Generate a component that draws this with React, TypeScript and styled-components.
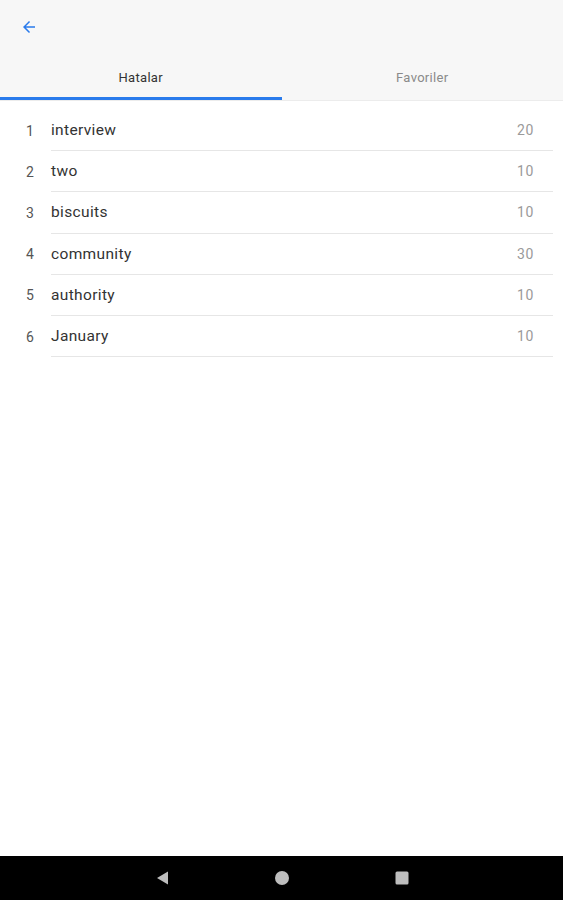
import React from 'react';
import styled, { createGlobalStyle } from 'styled-components';

const GlobalStyle = createGlobalStyle`
  html, body {
    margin: 0;
    padding: 0;
    background: #ffffff;
    font-family: Roboto, "Noto Sans", Arial, sans-serif;
  }
`;

const words = [
  { word: 'interview', count: 20 },
  { word: 'two', count: 10 },
  { word: 'biscuits', count: 10 },
  { word: 'community', count: 30 },
  { word: 'authority', count: 10 },
  { word: 'January', count: 10 },
];

export default function App() {
  return (
    <>
      <GlobalStyle />
      <Screen>
        <Header>
          <Toolbar>
            <BackButton aria-label="back">
              <svg width="18" height="18" viewBox="0 0 24 24">
                <path
                  d="M20 11H7.83l5.59-5.59L12 4l-8 8 8 8 1.41-1.41L7.83 13H20v-2z"
                  fill="#2a7bec"
                />
              </svg>
            </BackButton>
          </Toolbar>
          <Tabs>
            <Tab active>Hatalar</Tab>
            <Tab>Favoriler</Tab>
          </Tabs>
        </Header>
        <List>
          {words.map((w, i) => (
            <Row key={w.word}>
              <Index>{i + 1}</Index>
              <RowBody>
                <Word>{w.word}</Word>
                <Count>{w.count}</Count>
              </RowBody>
            </Row>
          ))}
        </List>
        <NavBar>
          <svg width="16" height="16" viewBox="0 0 16 16">
            <path d="M14 1.5v13L3 8z" fill="#bdbdbd" />
          </svg>
          <svg width="16" height="16" viewBox="0 0 16 16">
            <circle cx="8" cy="8" r="7" fill="#bdbdbd" />
          </svg>
          <svg width="16" height="16" viewBox="0 0 16 16">
            <rect x="1.5" y="1.5" width="13" height="13" rx="1.5" fill="#bdbdbd" />
          </svg>
        </NavBar>
      </Screen>
    </>
  );
}

const Screen = styled.div`
  width: 563px;
  height: 900px;
  display: flex;
  flex-direction: column;
  overflow: hidden;
`;

const Header = styled.div`
  background: #f7f7f7;
  border-bottom: 1px solid #ececec;
`;

const Toolbar = styled.div`
  height: 56px;
  display: flex;
  align-items: center;
  padding-left: 20px;
`;

const BackButton = styled.div`
  width: 18px;
  height: 18px;
  display: flex;
  margin-top: -2px;
`;

const Tabs = styled.div`
  display: flex;
  height: 44px;
`;

const Tab = styled.div<{ active?: boolean }>`
  flex: 1;
  display: flex;
  align-items: center;
  justify-content: center;
  padding-top: 1px;
  box-sizing: border-box;
  font-size: 13px;
  letter-spacing: 0.3px;
  color: ${(p) => (p.active ? '#333333' : '#8a8a8a')};
  border-bottom: 3px solid ${(p) => (p.active ? '#2a7bec' : 'transparent')};
`;

const List = styled.div`
  flex: 1;
  padding-top: 9px;
`;

const Row = styled.div`
  display: flex;
  height: 41.2px;
`;

const Index = styled.div`
  width: 51px;
  box-sizing: border-box;
  padding-left: 26px;
  display: flex;
  align-items: center;
  font-size: 14px;
  color: #555555;
`;

const RowBody = styled.div`
  flex: 1;
  margin-right: 10px;
  display: flex;
  align-items: center;
  justify-content: space-between;
  border-bottom: 1px solid #e6e6e6;
  padding-right: 19px;
`;

const Word = styled.div`
  font-size: 15.5px;
  letter-spacing: 0.35px;
  color: #333333;
`;

const Count = styled.div`
  font-size: 14px;
  letter-spacing: 0.6px;
  color: #9a9a9a;
`;

const NavBar = styled.div`
  height: 44px;
  background: #000000;
  display: flex;
  align-items: center;
  justify-content: center;
  gap: 104px;
`;
